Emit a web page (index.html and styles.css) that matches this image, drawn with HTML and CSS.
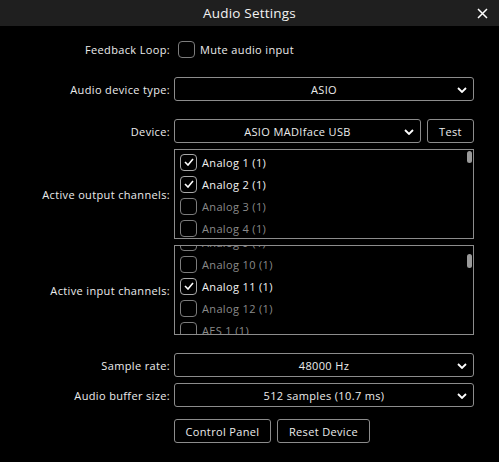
FILE: index.html
```html
<!DOCTYPE html>
<html lang="en">
<head>
  <meta charset="UTF-8">
  <title>Audio Settings</title>
  <link rel="stylesheet" href="styles.css">
</head>
<body>
  <div class="titlebar">
    <span class="title">Audio Settings</span>
    <svg class="close" width="11" height="11" viewBox="0 0 11 11"><path d="M1 1L10 10M10 1L1 10" stroke="#fff" stroke-width="1.5"/></svg>
  </div>

  <div class="panel">
    <div class="row row-feedback">
      <label class="label">Feedback Loop:</label>
      <div class="control check-line">
        <span class="box"></span>
        <span>Mute audio input</span>
      </div>
    </div>

    <div class="row row-type">
      <label class="label">Audio device type:</label>
      <div class="control combo">
        <span class="combo-text">ASIO</span>
        <svg class="chev" width="10" height="6" viewBox="0 0 10 6"><path d="M1 1L5 5L9 1" fill="none" stroke="#fff" stroke-width="1.8"/></svg>
      </div>
    </div>

    <div class="row row-device">
      <label class="label">Device:</label>
      <div class="control device-line">
        <div class="combo">
          <span class="combo-text">ASIO MADIface USB</span>
          <svg class="chev" width="10" height="6" viewBox="0 0 10 6"><path d="M1 1L5 5L9 1" fill="none" stroke="#fff" stroke-width="1.8"/></svg>
        </div>
        <button class="btn test">Test</button>
      </div>
    </div>

    <div class="row row-list">
      <label class="label">Active output channels:</label>
      <div class="control list">
        <div class="list-inner">
          <div class="item on"><span class="box"><svg width="10" height="8" viewBox="0 0 10 8"><path d="M1 4L4 7L9 1" fill="none" stroke="#fff" stroke-width="1.6"/></svg></span>Analog 1 (1)</div>
          <div class="item on"><span class="box"><svg width="10" height="8" viewBox="0 0 10 8"><path d="M1 4L4 7L9 1" fill="none" stroke="#fff" stroke-width="1.6"/></svg></span>Analog 2 (1)</div>
          <div class="item"><span class="box"></span>Analog 3 (1)</div>
          <div class="item"><span class="box"></span>Analog 4 (1)</div>
        </div>
        <span class="thumb"></span>
      </div>
    </div>

    <div class="row row-list">
      <label class="label">Active input channels:</label>
      <div class="control list">
        <div class="list-inner scrolled">
          <div class="item"><span class="box"></span>Analog 9 (1)</div>
          <div class="item"><span class="box"></span>Analog 10 (1)</div>
          <div class="item on"><span class="box"><svg width="10" height="8" viewBox="0 0 10 8"><path d="M1 4L4 7L9 1" fill="none" stroke="#fff" stroke-width="1.6"/></svg></span>Analog 11 (1)</div>
          <div class="item"><span class="box"></span>Analog 12 (1)</div>
          <div class="item"><span class="box"></span>AES 1 (1)</div>
        </div>
        <span class="thumb thumb-low"></span>
      </div>
    </div>

    <div class="row row-rate">
      <label class="label">Sample rate:</label>
      <div class="control combo">
        <span class="combo-text">48000 Hz</span>
        <svg class="chev" width="10" height="6" viewBox="0 0 10 6"><path d="M1 1L5 5L9 1" fill="none" stroke="#fff" stroke-width="1.8"/></svg>
      </div>
    </div>

    <div class="row row-buffer">
      <label class="label">Audio buffer size:</label>
      <div class="control combo">
        <span class="combo-text">512 samples (10.7 ms)</span>
        <svg class="chev" width="10" height="6" viewBox="0 0 10 6"><path d="M1 1L5 5L9 1" fill="none" stroke="#fff" stroke-width="1.8"/></svg>
      </div>
    </div>

    <div class="row row-buttons">
      <span class="label"></span>
      <div class="buttons">
        <button class="btn cp">Control Panel</button>
        <button class="btn rd">Reset Device</button>
      </div>
    </div>
  </div>
</body>
</html>
```

FILE: styles.css
```css
body {
  margin: 0;
  background: #000;
  color: #ececec;
  font-family: "Open Sans", "Liberation Sans", sans-serif;
  font-size: 11px;
  letter-spacing: 0.35px;
}

/* title bar */
.titlebar {
  height: 26px;
  background: #1f1f1f;
  display: flex;
  align-items: center;
  justify-content: center;
  position: relative;
}

.title {
  font-size: 13.5px;
  letter-spacing: 0.2px;
  color: #f2f2f2;
}

.close {
  position: absolute;
  right: 11px;
  top: 8px;
}

/* rows */
.panel {
  display: flex;
  flex-direction: column;
}

.row {
  display: grid;
  grid-template-columns: 170px 300px;
  column-gap: 4px;
  align-items: center;
}

.label {
  text-align: right;
  color: #ececec;
}

.row-feedback { margin-top: 14px; height: 18px; }
.row-type { margin-top: 19px; height: 24px; }
.row-device { margin-top: 18px; height: 24px; }
.row-list { margin-top: 6px; height: 90px; }
.row-rate { margin-top: 18px; height: 24px; }
.row-buffer { margin-top: 6px; height: 24px; }
.row-buttons { margin-top: 12px; height: 24px; }

/* checkbox */
.box {
  width: 15px;
  height: 15px;
  border: 1px solid #7c7c7c;
  border-radius: 4px;
  display: inline-flex;
  align-items: center;
  justify-content: center;
  flex: none;
}

.check-line {
  display: flex;
  align-items: center;
  gap: 5px;
  padding-left: 4px;
}

/* combo boxes */
.combo {
  height: 24px;
  box-sizing: border-box;
  border: 1px solid #8c8c8c;
  border-radius: 3px;
  display: flex;
  align-items: center;
  justify-content: center;
  position: relative;
}

.chev {
  position: absolute;
  right: 6px;
  top: 9px;
}

.device-line {
  display: flex;
  gap: 6px;
  height: 24px;
}

.device-line .combo {
  flex: 1;
}

/* buttons */
.btn {
  height: 24px;
  box-sizing: border-box;
  background: #000;
  color: #ececec;
  border: 1px solid #8c8c8c;
  border-radius: 3px;
  font-family: inherit;
  font-size: 11px;
  letter-spacing: 0.35px;
  padding: 0;
}

.test { width: 47px; }
.cp { width: 97px; }
.rd { width: 93px; }

.buttons {
  display: flex;
  gap: 6px;
}

/* channel lists */
.list {
  height: 90px;
  box-sizing: border-box;
  border: 1px solid #8c8c8c;
  overflow: hidden;
  position: relative;
}

.list-inner {
  padding-top: 1px;
}

.list-inner.scrolled {
  margin-top: -16px;
}

.item {
  height: 22px;
  display: flex;
  align-items: center;
  gap: 5px;
  padding-left: 5px;
  color: #8a8a8a;
}

.item.on {
  color: #f2f2f2;
}

.item.on .box {
  border-color: #a8a8a8;
}

.thumb {
  position: absolute;
  right: 1px;
  top: 1px;
  width: 5px;
  height: 12px;
  border-radius: 3px;
  background: #9a9a9a;
}

.thumb-low {
  top: 8px;
  height: 14px;
}
```
